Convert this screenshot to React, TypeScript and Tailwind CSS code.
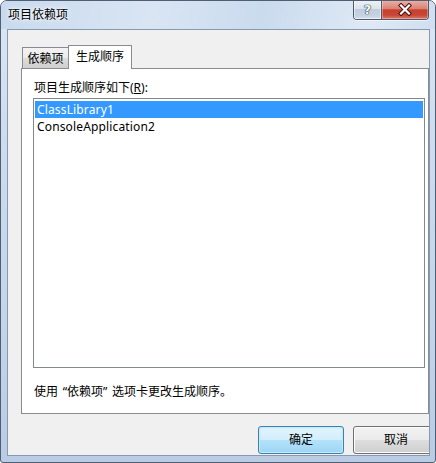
import React from "react";

const Item = ({ text, selected }: { text: string; selected?: boolean }) => (
  <div
    className={
      "h-[17px] leading-[17px] pl-[2px] whitespace-nowrap tracking-[0.15px] " +
      (selected ? "bg-[#3399ff] text-white" : "text-black")
    }
  >
    {text}
  </div>
);

export default function App() {
  return (
    <div className="w-[436px] h-[463px] bg-white font-['Noto_Sans','Noto_Sans_CJK_SC',sans-serif] text-[12px] text-black">
      <div className="w-[436px] h-[463px] flex flex-col border border-[#4f5e72] rounded-t-[7px] rounded-b-[3px] overflow-hidden bg-[linear-gradient(to_bottom,#dbe7f5_0%,#cddcee_30%,#c4d5ea_70%,#b9cce4_100%)]">
        {/* Title bar */}
        <div className="h-[28px] shrink-0 flex items-start bg-[linear-gradient(100deg,#c9daee_0%,#d9e5f3_35%,#cadbee_60%,#dfe9f5_85%,#d0def0_100%)]">
          <div className="pl-[7px] mt-[6px] leading-[16px] text-[12px] text-black [text-shadow:0_0_6px_#ffffff,0_0_3px_#ffffff]">
            项目依赖项
          </div>
          <div className="ml-auto mr-[6px] -mt-px flex h-[20px] border border-[#4e5a6a] border-t-0 rounded-b-[4px] overflow-hidden shadow-[0_1px_0_#ffffff90]">
            <div className="w-[28px] h-full flex items-center justify-center border-r border-[#4e5a6a] bg-[linear-gradient(to_bottom,#eef2f7_0%,#dbe3ec_45%,#c0cddc_50%,#c7d3e1_85%,#dbe4ee_100%)] shadow-[inset_0_0_0_1px_#ffffff80]">
              <span className="text-[13px] font-bold leading-none text-[#f4f6f9] [text-shadow:0_0_1px_#2b3747,0_0_1px_#2b3747,0_0_1px_#2b3747] font-['DejaVu_Sans',sans-serif]">
                ?
              </span>
            </div>
            <div className="w-[46px] h-full flex items-center justify-center bg-[linear-gradient(to_bottom,#eab4aa_0%,#dc8275_45%,#c7402f_52%,#c94636_80%,#df7d6c_100%)] shadow-[inset_0_0_0_1px_#ffffff50]">
              <svg width="16" height="13" viewBox="0 0 16 13">
                <path d="M4 2.5 L12 10.5 M12 2.5 L4 10.5" stroke="#4a120b" strokeWidth="4.2" strokeLinecap="square" fill="none" />
                <path d="M4 2.5 L12 10.5 M12 2.5 L4 10.5" stroke="#ffffff" strokeWidth="2.2" strokeLinecap="square" fill="none" />
              </svg>
            </div>
          </div>
        </div>

        {/* Body frame */}
        <div className="flex-1 flex pl-[6px] pr-[5px] pb-[6px]">
          <div className="flex-1 border border-[#8799b0] bg-[#f0f0f0] overflow-hidden flex flex-col">
            <div className="flex flex-col pl-[13px] pt-[15px]">
              {/* Tabs */}
              <div className="relative z-10 flex items-end h-[23px] pl-[1px]">
                <div className="w-[47px] h-[21px] border border-b-0 border-[#898c95] bg-[linear-gradient(to_bottom,#f3f3f3_0%,#ebebeb_50%,#dddddd_51%,#cfcfcf_100%)] flex justify-center pt-[3px] leading-[16px] whitespace-nowrap">
                  依赖项
                </div>
                <div className="-ml-px -mb-px w-[64px] h-[24px] border border-b-0 border-[#898c95] bg-white flex justify-center pt-[3px] leading-[16px] whitespace-nowrap">
                  生成顺序
                </div>
              </div>
              {/* Panel */}
              <div className="w-[408px] h-[346px] shrink-0 border border-[#898c95] bg-white flex flex-col pl-[11px] pt-[11px]">
                <div className="pl-[1px] leading-[16px] whitespace-nowrap">
                  项目生成顺序如下(<span className="underline underline-offset-[1px]">R</span>):
                </div>
                <div className="mt-[2px] w-[392px] h-[270px] shrink-0 border border-[#828790] bg-white pt-[2px] px-[1px]">
                  <Item text="ClassLibrary1" selected />
                  <Item text="ConsoleApplication2" />
                </div>
                <div className="mt-[16px] pl-[1px] leading-[16px] whitespace-nowrap flex">
                  <span>使用</span>
                  <span className="inline-block w-[9px] text-right">“</span>
                  <span>依赖项</span>
                  <span className="inline-block w-[9px] text-left">”</span>
                  <span>选项卡更改生成顺序。</span>
                </div>
              </div>
              {/* Buttons */}
              <div className="mt-[12px] ml-[237px] flex gap-[9px] shrink-0">
                <div className="w-[86px] h-[28px] shrink-0 rounded-[3px] border border-[#3c7fb1] bg-[linear-gradient(to_bottom,#e3f4fc_0%,#d2eefc_50%,#b4e2fb_51%,#9dd5f3_100%)] shadow-[inset_0_0_0_1px_#c6ecfc,inset_0_0_3px_#9fd8f3] flex items-center justify-center leading-[16px]">
                  确定
                </div>
                <div className="w-[86px] h-[28px] shrink-0 rounded-[3px] border border-[#707070] bg-[linear-gradient(to_bottom,#f2f2f2_0%,#ebebeb_50%,#dddddd_51%,#cfcfcf_100%)] shadow-[inset_0_0_0_1px_#fcfcfc] flex items-center justify-center leading-[16px]">
                  取消
                </div>
              </div>
            </div>
          </div>
        </div>
      </div>
    </div>
  );
}
